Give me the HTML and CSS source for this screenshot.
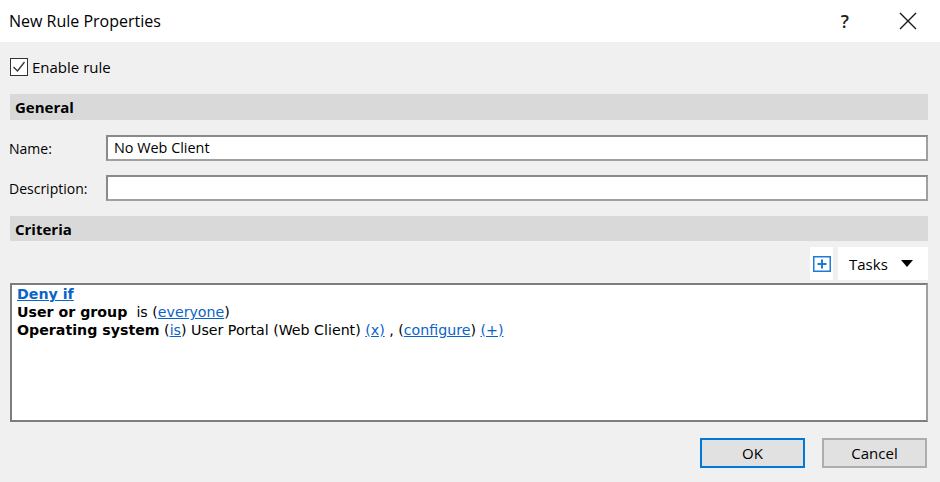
FILE: index.html
```html
<!DOCTYPE html>
<html lang="en">
<head>
  <meta charset="UTF-8">
  <title>New Rule Properties</title>
  <link rel="stylesheet" href="styles.css">
</head>
<body>
  <header class="titlebar">
    <span class="title">New Rule Properties</span>
    <span class="help">?</span>
    <svg class="close" width="18" height="18" viewBox="0 0 18 18">
      <path d="M1 1 L17 17 M17 1 L1 17" stroke="#1a1a1a" stroke-width="1.4" fill="none"/>
    </svg>
  </header>
  <main class="dialog">
    <label class="enable">
      <svg class="check" width="18" height="18" viewBox="0 0 18 18">
        <rect x="0.5" y="0.5" width="17" height="17" fill="#fff" stroke="#333" stroke-width="1"/>
        <path d="M3.5 9 L7.5 13 L14.5 4" stroke="#333" stroke-width="1.3" fill="none"/>
      </svg>
      Enable rule
    </label>

    <div class="section-bar general">General</div>

    <div class="field name-row">
      <span class="field-label">Name:</span>
      <div class="text-box">No Web Client</div>
    </div>
    <div class="field desc-row">
      <span class="field-label">Description:</span>
      <div class="text-box"></div>
    </div>

    <div class="section-bar criteria">Criteria</div>

    <div class="toolbar">
      <span class="add-btn">
        <svg width="18" height="16" viewBox="0 0 18 16">
          <rect x="0.75" y="0.75" width="16.5" height="14.5" fill="#fff" stroke="#1e7ad6" stroke-width="1.5"/>
          <path d="M9 3.5 V12.5 M4.5 8 H13.5" stroke="#1e7ad6" stroke-width="2" fill="none"/>
        </svg>
      </span>
      <span class="tasks">Tasks <span class="caret"></span></span>
    </div>

    <div class="rule-box">
      <div><a class="deny">Deny if</a></div>
      <div><b>User or group</b>&nbsp; is (<a>everyone</a>)</div>
      <div><b>Operating system</b> (<a>is</a>) User Portal (Web Client) <a>(x)</a> , (<a>configure</a>) <a>(+)</a></div>
    </div>

    <div class="actions">
      <button class="btn default">OK</button>
      <button class="btn">Cancel</button>
    </div>
  </main>
</body>
</html>
```

FILE: styles.css
```css
body {
  margin: 0;
  width: 940px;
  height: 482px;
  background: #f0f0f0;
  font-family: 'Open Sans', 'Noto Sans', sans-serif;
  font-size: 14px;
  color: #000;
  overflow: hidden;
}
.titlebar {
  height: 42px;
  background: #fff;
  display: flex;
  align-items: center;
  padding-left: 9px;
}
.title {
  font-size: 16px;
  flex: 1;
}
.help {
  font-size: 18px;
  font-weight: 600;
  color: #222;
  margin-right: 50px;
}
.close {
  margin-right: 23px;
}
.dialog {
  padding: 0 12px 0 10px;
}
.enable {
  display: flex;
  align-items: center;
  gap: 4px;
  margin-top: 16px;
  height: 18px;
  font-size: 15px;
}
.section-bar {
  background: #d9d9d9;
  font-weight: bold;
  font-size: 15px;
  padding-left: 5px;
  display: flex;
  align-items: center;
}
.general {
  margin-top: 18px;
  height: 26px;
}
.criteria {
  margin-top: 15px;
  height: 25px;
}
.field {
  display: flex;
  align-items: center;
  height: 26px;
}
.name-row {
  margin-top: 15px;
}
.desc-row {
  margin-top: 14px;
}
.field-label {
  width: 96px;
  margin-left: -1px;
  font-size: 14px;
}
.text-box {
  flex: 1;
  height: 22px;
  margin-left: 1px;
  background: #fff;
  border: 2px solid #8a8a8a;
  border-right-color: #a0a0a0;
  border-bottom-color: #a0a0a0;
  padding: 0 0 2px 6px;
  box-sizing: content-box;
  display: flex;
  align-items: center;
  font-size: 14.4px;
}
.text-box {
  height: 20px;
}
.toolbar {
  margin-top: 6px;
  height: 33px;
  display: flex;
  justify-content: flex-end;
  gap: 5px;
}
.add-btn {
  width: 23px;
  background: #fff;
  display: flex;
  align-items: center;
  justify-content: center;
}
.tasks {
  width: 90px;
  background: #fff;
  display: flex;
  align-items: center;
  padding-left: 11px;
  box-sizing: border-box;
  font-size: 15px;
  gap: 11px;
}
.caret {
  width: 0;
  height: 0;
  border-left: 6px solid transparent;
  border-right: 6px solid transparent;
  border-top: 7px solid #000;
  margin-left: 2px;
}
.rule-box {
  margin-top: 3px;
  height: 135px;
  background: #fff;
  border: 2px solid #7d7d7d;
  border-right-color: #a0a0a0;
  border-bottom-color: #7d7d7d;
  padding: 0 0 0 5px;
  font-family: 'DejaVu Sans', sans-serif;
  font-size: 14.2px;
  line-height: 18px;
}
.rule-box a {
  color: #0a64c8;
  text-decoration: underline;
}
.rule-box .deny {
  font-weight: bold;
}
.actions {
  margin-top: 16px;
  display: flex;
  justify-content: flex-end;
  gap: 17px;
  padding-right: 1px;
}
.btn {
  width: 105px;
  height: 30px;
  background: #e1e1e1;
  border: 2px solid #adadad;
  font-family: 'Open Sans', 'Noto Sans', sans-serif;
  font-size: 15px;
  color: #000;
}
.btn.default {
  border-color: #0078d7;
}
```
